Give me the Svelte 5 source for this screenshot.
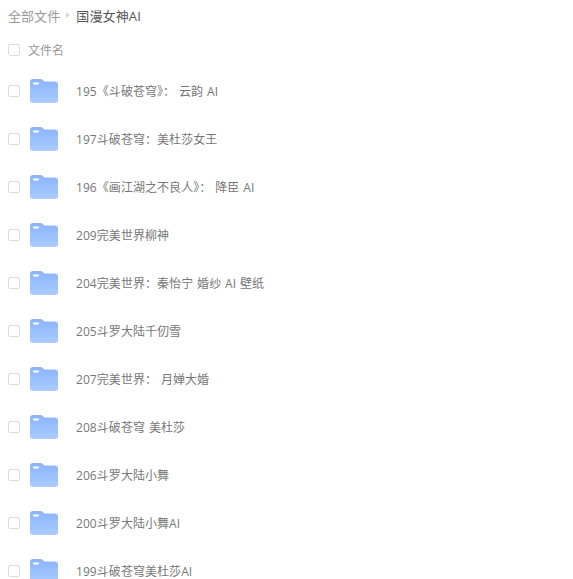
<script>
    const files = [
        '195《斗破苍穹》： 云韵 AI',
        '197斗破苍穹：美杜莎女王',
        '196《画江湖之不良人》： 降臣 AI',
        '209完美世界柳神',
        '204完美世界：秦怡宁 婚纱 AI 壁纸',
        '205斗罗大陆千仞雪',
        '207完美世界： 月婵大婚',
        '208斗破苍穹 美杜莎',
        '206斗罗大陆小舞',
        '200斗罗大陆小舞AI',
        '199斗破苍穹美杜莎AI'
    ]
</script>

<div class="page">
    <div class="crumbs">
        <span class="all">全部文件</span>
        <span class="arrow"></span>
        <span class="current">国漫女神AI</span>
    </div>
    <div class="head">
        <span class="check"></span>
        <span class="title">文件名</span>
    </div>
    {#each files as name}
        <div class="row">
            <span class="check"></span>
            <svg class="folder" width="28" height="24" viewBox="0 0 28 24">
                <defs>
                    <linearGradient id="fill" x1="0" y1="0" x2="0" y2="1">
                        <stop offset="0" stop-color="#8ab4ff" />
                        <stop offset="1" stop-color="#a9cbff" />
                    </linearGradient>
                </defs>
                <path d="M3 0H10C11.500 0 12.500 .6 13.500 1.800L14 2.500H25C26.700 2.500 28 3.800 28 5.500V21C28 22.700 26.700 24 25 24H3C1.300 24 0 22.700 0 21V3C0 1.300 1.300 0 3 0Z" fill="url(#fill)" />
                <rect x="3" y="3.500" width="6" height="2" rx=".5" fill="#fff" />
            </svg>
            <span class="name">{name}</span>
        </div>
    {/each}
</div>

<style>
    :global(body) {
        margin: 0;
        background: #fff;
        overflow: hidden;
    }
    .page {
        height: 579px;
        overflow: hidden;
        padding-left: 8px;
        font-family: "Open Sans", "Noto Sans CJK SC", sans-serif;
        font-size: 12px;
        word-spacing: .7px;
        letter-spacing: .06px;
    }
    .crumbs {
        display: flex;
        align-items: center;
        height: 30px;
        font-size: 13px;
    }
    .all {
        color: #999;
    }
    .arrow {
        width: 0;
        height: 0;
        margin: 0 6px;
        border-left: 4px solid #d4d6d9;
        border-top: 3px solid transparent;
        border-bottom: 3px solid transparent;
    }
    .current {
        color: #555;
        letter-spacing: .15px;
    }
    .head {
        display: flex;
        align-items: center;
        gap: 8px;
        box-sizing: border-box;
        height: 37px;
        padding-top: 3px;
    }
    .title {
        color: #999;
    }
    .row {
        display: flex;
        align-items: center;
        height: 48px;
        color: #777;
    }
    .check {
        box-sizing: border-box;
        width: 12px;
        height: 12px;
        flex: none;
        border: 1px solid #ddd;
        border-radius: 2px;
    }
    .folder {
        flex: none;
        margin: 0 18px 0 10px;
    }
    .name {
        margin-top: -1px;
    }
</style>
